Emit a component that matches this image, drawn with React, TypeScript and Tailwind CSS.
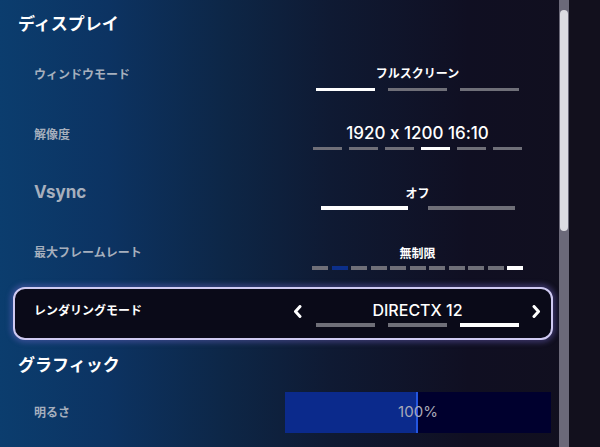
import React from "react";

const jp = { fontFamily: '"Noto Sans CJK JP", "Noto Sans", sans-serif' };
const lat = { fontFamily: 'Inter, "Noto Sans CJK JP", sans-serif', fontFeatureSettings: '"calt" 0' };

function Segs({ count, w, gap, active, h, blue }: { count: number; w: number; gap: number; active: number; h: number; blue?: number }) {
  return (
    <div className="flex" style={{ gap }}>
      {Array.from({ length: count }).map((_, i) => (
        <div
          key={i}
          style={{ width: w, height: h }}
          className={i === active ? "bg-white" : i === blue ? "bg-[#0c2f8a]" : "bg-[#6f6f78]"}
        />
      ))}
    </div>
  );
}

export default function App() {
  return (
    <div
      className="relative w-[600px] h-[447px] overflow-hidden flex"
      style={{
        background:
          "linear-gradient(90deg, #0b3d6e 0%, #0c3362 18%, #0d2646 38%, #0f1a33 55%, #100f22 78%, #110f1e 100%)",
      }}
    >
      <div className="w-[559px] flex flex-col">
        {/* Title */}
        <div className="h-[45px] pt-[11px] pl-[18px] text-[17px] leading-[24px] font-bold text-white" style={jp}>
          ディスプレイ
        </div>

        {/* Window mode */}
        <div className="h-[60px] flex">
          <div className="flex-1 pl-[34px] pt-[21px] text-[12px] leading-[16px] font-bold text-[#a6afbd]" style={jp}>
            ウィンドウモード
          </div>
          <div className="w-[265px] mr-[9px] flex flex-col items-center pt-[20px]">
            <div className="text-[12px] leading-[16px] font-bold text-white" style={jp}>フルスクリーン</div>
            <div className="mt-[7px]">
              <Segs count={3} w={59} gap={13} active={0} h={3} />
            </div>
          </div>
        </div>

        {/* Resolution */}
        <div className="h-[60px] flex">
          <div className="flex-1 pl-[34px] pt-[21px] text-[12px] leading-[16px] font-bold text-[#a6afbd]" style={jp}>
            解像度
          </div>
          <div className="w-[265px] mr-[9px] flex flex-col items-center pt-[18px]">
            <div className="text-[17px] leading-[20px] font-medium text-white" style={lat}>1920 x 1200 16:10</div>
            <div className="mt-[4px]">
              <Segs count={6} w={29} gap={7} active={3} h={3} />
            </div>
          </div>
        </div>

        {/* Vsync */}
        <div className="h-[60px] flex">
          <div className="flex-1 pl-[34px] pt-[17px] text-[17px] leading-[20px] font-bold text-[#a6afbd]" style={lat}>
            Vsync
          </div>
          <div className="w-[265px] mr-[9px] flex flex-col items-center pt-[20px]">
            <div className="text-[12px] leading-[16px] font-bold text-white" style={jp}>オフ</div>
            <div className="mt-[5px]">
              <Segs count={2} w={87} gap={20} active={0} h={4} />
            </div>
          </div>
        </div>

        {/* Max frame rate */}
        <div className="h-[60px] flex">
          <div className="flex-1 pl-[34px] pt-[19px] text-[12px] leading-[16px] font-bold text-[#a6afbd]" style={jp}>
            最大フレームレート
          </div>
          <div className="w-[265px] mr-[9px] flex flex-col items-center pt-[20px]">
            <div className="text-[12px] leading-[16px] font-bold text-white" style={jp}>無制限</div>
            <div className="mt-[5px]">
              <Segs count={11} w={16} gap={3.5} active={10} blue={1} h={4} />
            </div>
          </div>
        </div>

        {/* Rendering mode box */}
        <div className="mt-[2px] ml-[13px] w-[540px] h-[53px] rounded-[12px] border-2 border-[#cfcaf2] bg-[#0a0a18] shadow-[0_0_5px_3px_rgba(120,110,210,0.35)] flex">
          <div className="flex-1 pl-[19px] pt-[13px] text-[12px] leading-[16px] font-bold text-white" style={jp}>
            レンダリングモード
          </div>
          <div className="relative w-[265px] mr-[1px] flex flex-col items-center pt-[11px]">
            <svg className="absolute left-[8px] top-[16px]" width="9" height="13" viewBox="0 0 9 13">
              <polyline points="7,1.5 2.5,6.5 7,11.5" fill="none" stroke="white" strokeWidth="3" strokeLinejoin="round" strokeLinecap="round" />
            </svg>
            <div className="text-[16px] leading-[20px] font-medium text-white" style={lat}>DIRECTX 12</div>
            <div className="mt-[3px]">
              <Segs count={3} w={59} gap={13} active={2} h={4} />
            </div>
            <svg className="absolute right-[9px] top-[16px]" width="9" height="13" viewBox="0 0 9 13">
              <polyline points="2,1.5 6.5,6.5 2,11.5" fill="none" stroke="white" strokeWidth="3" strokeLinejoin="round" strokeLinecap="round" />
            </svg>
          </div>
        </div>

        {/* Graphics title */}
        <div className="h-[52px] pt-[12px] pl-[18px] text-[17px] leading-[24px] font-bold text-white" style={jp}>
          グラフィック
        </div>

        {/* Brightness */}
        <div className="h-[41px] flex">
          <div className="flex-1 pl-[34px] pt-[12px] text-[12px] leading-[16px] font-bold text-[#a6afbd]" style={jp}>
            明るさ
          </div>
          <div className="relative w-[266px] mr-[8px] h-[41px] bg-[#00002e] flex">
            <div className="w-[133px] h-full bg-[#0b2a8c] border-r-2 border-[#2456e0]" />
            <div className="absolute inset-0 flex items-center justify-center text-[15px] text-[#a9aab8]" style={lat}>
              100%
            </div>
          </div>
        </div>
      </div>

      {/* Scrollbar */}
      <div className="w-[10px] h-full bg-[#6b6979] relative">
        <div className="absolute left-[1px] right-[1px] top-[10px] h-[221px] rounded-[4px] bg-[#dcdce2]" />
      </div>
      <div className="flex-1 bg-[#12101d]" />
    </div>
  );
}
